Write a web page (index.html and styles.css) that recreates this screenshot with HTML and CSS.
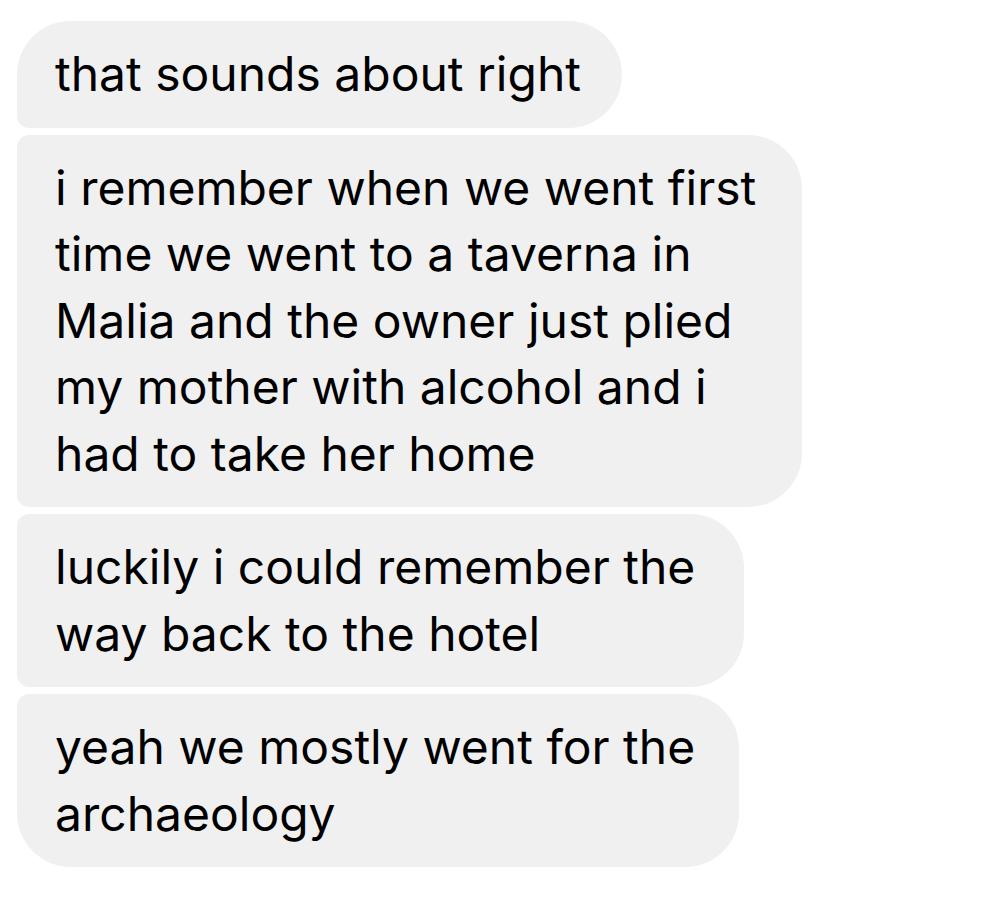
FILE: index.html
```html
<!DOCTYPE html>
<html lang="en">
<head>
    <meta charset="UTF-8">
    <meta name="viewport" content="width=device-width, initial-scale=1.0">
    <title>Messages</title>
    <link rel="stylesheet" href="styles.css">
</head>
<body>
    <div class="thread">
        <div class="bubble bubble-first w-short">that sounds about right</div>
        <div class="bubble w-wide">i remember when we went first<br>time we went to a taverna in<br>Malia and the owner just plied<br>my mother with alcohol and i<br>had to take her home</div>
        <div class="bubble w-mid">luckily i could remember the<br>way back to the hotel</div>
        <div class="bubble bubble-last w-mid2">yeah we mostly went for the<br>archaeology</div>
    </div>
</body>
</html>
```

FILE: styles.css
```css
body {
    margin: 0;
    background: #ffffff;
    font-family: 'Inter', 'Noto Sans', sans-serif;
    color: #000000;
}
.thread {
    display: flex;
    flex-direction: column;
    align-items: flex-start;
    gap: 7px;
    padding: 21px 0 0 17px;
}
.bubble {
    box-sizing: border-box;
    background: #f0f0f0;
    padding: 20px 30px 20px 38px;
    font-size: 48px;
    line-height: 66.5px;
    border-radius: 12px 54px 54px 12px;
    white-space: nowrap;
}
.bubble-first {
    border-top-left-radius: 54px;
}
.bubble-last {
    border-bottom-left-radius: 54px;
}
.w-short { width: 605px; }
.w-wide { width: 785px; }
.w-mid { width: 727px; }
.w-mid2 { width: 722px; }
```
